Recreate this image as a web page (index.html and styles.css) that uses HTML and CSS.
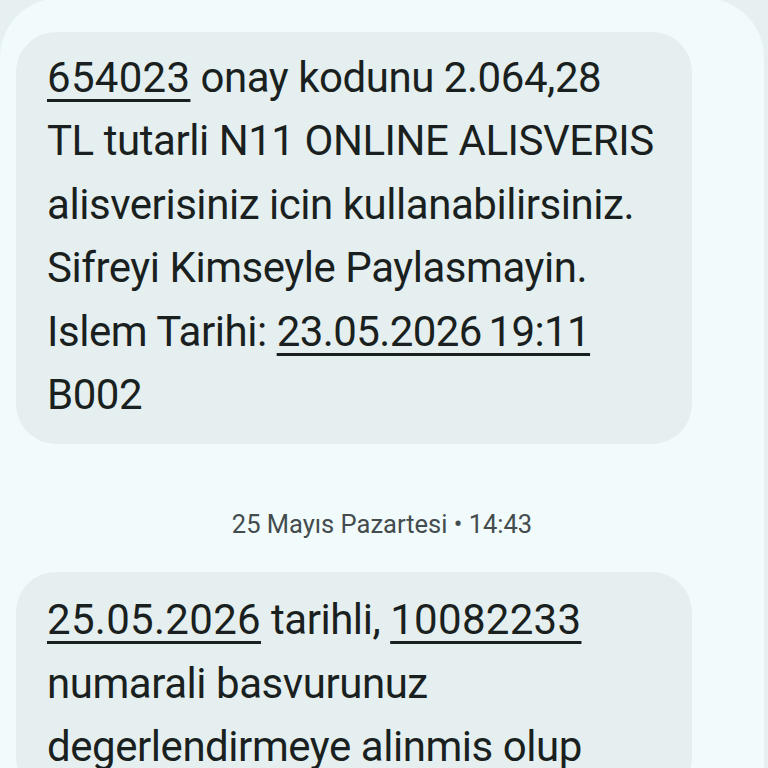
FILE: index.html
```html
<!DOCTYPE html>
<html>
<head>
<meta charset="utf-8">
<link rel="stylesheet" href="styles.css">
</head>
<body>
<div class="panel">
  <div class="bubble first">
    <p class="msg"><span class="u">654023</span> onay kodunu 2.064,28<br>TL tutarli N11 ONLINE ALISVERIS<br>alisverisiniz icin kullanabilirsiniz.<br>Sifreyi Kimseyle Paylasmayin.<br>Islem Tarihi: <span class="u tight">23.05.2026 19:11</span><br>B002</p>
  </div>
  <div class="stamp">25 Mayıs Pazartesi • 14:43</div>
  <div class="bubble second">
    <p class="msg"><span class="u">25.05.2026</span> tarihli, <span class="u">10082233</span><br>numarali basvurunuz<br>degerlendirmeye alinmis olup</p>
  </div>
</div>
</body>
</html>
```
FILE: styles.css
```css
html, body {
  margin: 0;
  padding: 0;
  background: #e6f0f1;
  overflow: hidden;
  height: 768px;
}
.panel {
  margin: -2px 4px 0 0;
  height: 800px;
  background: #f1fbfc;
  border-radius: 60px 60px 0 0;
  padding: 34px 0 0 16px;
  box-sizing: border-box;
}
.bubble {
  width: 676px;
  background: #e5eff0;
  border-radius: 40px;
  box-sizing: border-box;
  padding: 14px 20px 18px 31px;
}
.bubble.second {
  padding-top: 16px;
}
.msg {
  margin: 0;
  font-family: Roboto, "Noto Sans", sans-serif;
  font-size: 42px;
  line-height: 63.4px;
  letter-spacing: -0.45px;
  color: #1a1f20;
  white-space: nowrap;
}
.u {
  letter-spacing: 0.3px;
  text-decoration: underline;
  text-decoration-thickness: 3px;
  text-underline-offset: 7px;
}
.u.tight {
  letter-spacing: -0.6px;
  word-spacing: -3px;
}
.stamp {
  margin: 65px 0 33px -16px;
  text-align: center;
  font-family: Roboto, "Noto Sans", sans-serif;
  font-size: 25.5px;
  color: #444c4e;
  line-height: 30px;
}
```
